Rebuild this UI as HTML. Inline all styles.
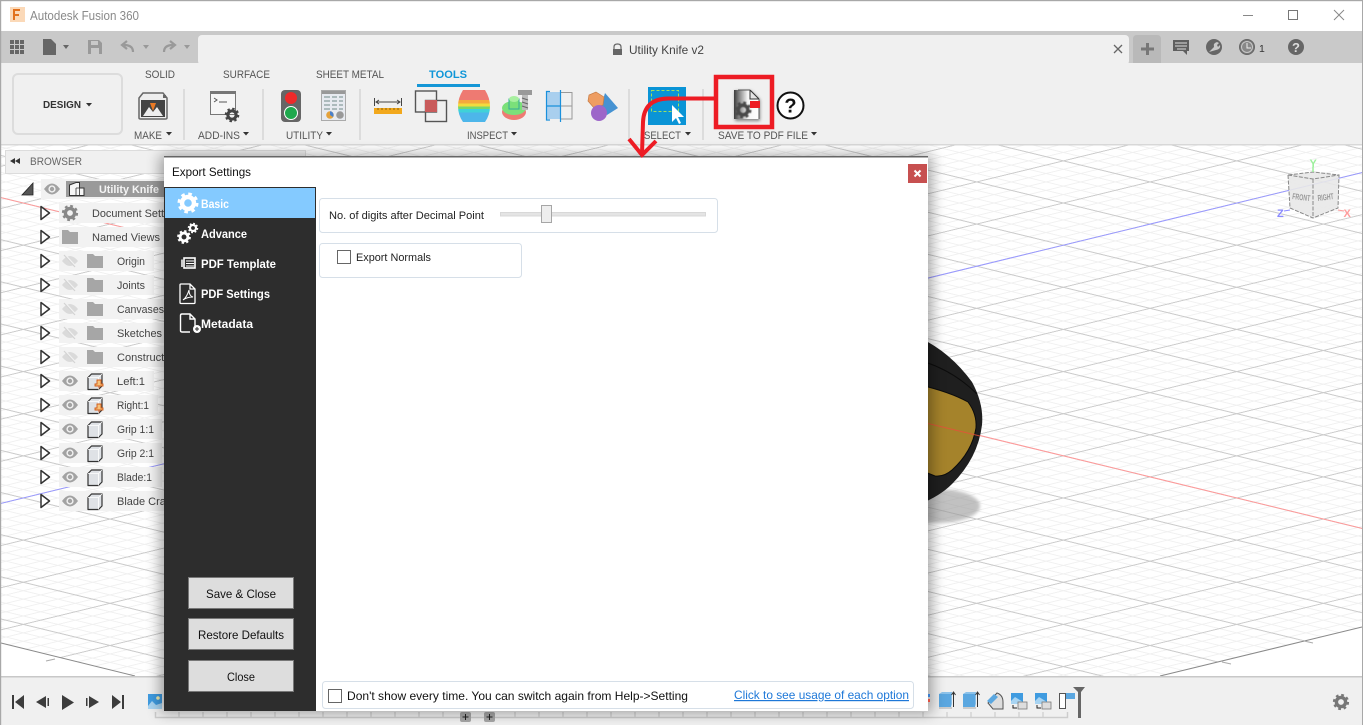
<!DOCTYPE html>
<html lang="en"><head><meta charset="utf-8"><title>Autodesk Fusion 360</title>
<style>
html,body{margin:0;padding:0;background:#fff;overflow:hidden;width:1366px;height:725px}
svg{display:block}
text{font-family:"Liberation Sans",Arial,sans-serif;white-space:pre}
.r{font-size:11px;fill:#555}
.tr{font-size:11px;fill:#444}
.d{font-size:12px;fill:#111}
.m{font-size:12px;fill:#fff;font-weight:bold}
</style></head><body>
<svg width="1366" height="725" viewBox="0 0 1366 725" xmlns="http://www.w3.org/2000/svg">
<defs>
<pattern id="minor" patternUnits="userSpaceOnUse" width="100" height="100" patternTransform="matrix(.8667 .2107 .8667 -.2107 630 350.5)">
<path d="M20 0V100M40 0V100M60 0V100M80 0V100M0 20H100M0 40H100M0 60H100M0 80H100" stroke="#f0f0f0" stroke-width="2.2" fill="none"/>
</pattern>
<pattern id="major" patternUnits="userSpaceOnUse" width="100" height="100" patternTransform="matrix(.8667 .2107 .8667 -.2107 630 350.5)">
<path d="M0 0V100M100 0V100M0 0H100M0 100H100" stroke="#cccccc" stroke-width="2.4" fill="none"/>
</pattern>
<clipPath id="gc"><path d="M1 145H1362V627L1160 676H135L1 643Z"/></clipPath>
<filter id="sh" x="-10%" y="-10%" width="120%" height="120%"><feGaussianBlur stdDeviation="7"/></filter>
<filter id="bl" x="-30%" y="-30%" width="160%" height="160%"><feGaussianBlur stdDeviation="1.5"/></filter>
<filter id="bs" x="-30%" y="-30%" width="160%" height="160%"><feGaussianBlur stdDeviation=".6"/></filter>
<linearGradient id="zb" x1="0" y1="0" x2="0" y2="1">
<stop offset="0" stop-color="#ee7a72"/><stop offset=".32" stop-color="#ee7a72"/><stop offset=".32" stop-color="#f5a93c"/><stop offset=".42" stop-color="#f5a93c"/><stop offset=".42" stop-color="#f1dc3e"/><stop offset=".52" stop-color="#f1dc3e"/><stop offset=".52" stop-color="#7ad86a"/><stop offset=".6" stop-color="#7ad86a"/><stop offset=".6" stop-color="#3fd2d8"/><stop offset=".7" stop-color="#3fd2d8"/><stop offset=".7" stop-color="#4db6ea"/><stop offset="1" stop-color="#4db6ea"/>
</linearGradient>
<linearGradient id="docg" x1="0" y1="0" x2="1" y2="0"><stop offset="0" stop-color="#3c3c3c"/><stop offset=".22" stop-color="#8a8a8a"/><stop offset=".55" stop-color="#f6f6f6"/><stop offset="1" stop-color="#fff"/></linearGradient>
<g id="gear"><circle r="4.6" fill="none" stroke="currentColor" stroke-width="3.4"/><circle r="6.8" fill="none" stroke="currentColor" stroke-width="2.6" stroke-dasharray="2.67 2.67"/></g>
<path id="tri" d="M-4 -6.5L4.5 0L-4 6.5Z" fill="#fff" stroke="#333" stroke-width="1.5" stroke-linejoin="round"/>
<g id="eye"><path d="M-8 0Q-4 -5.5 0 -5.5Q4 -5.5 8 0Q4 5.5 0 5.5Q-4 5.5 -8 0Z" fill="#a2a2a2"/><circle r="3.6" fill="#f2f2f2"/><circle r="2.2" fill="#a2a2a2"/></g>
<g id="eyeoff" opacity=".55"><path d="M-8 0Q-4 -5 0 -5Q4 -5 8 0Q4 5 0 5Q-4 5 -8 0Z" fill="#c8c8c8"/><path d="M-5 -6L6 6" stroke="#f2f2f2" stroke-width="2"/><path d="M-6 -6L5 6" stroke="#bbb" stroke-width="1.2"/></g>
<path id="folder" d="M0 -7H6L8 -5H16V7H0Z" fill="#a6a6a6"/>
<g id="body"><path d="M1 -3.5L4.5 -7H15V5L11.5 8.5H1Z" fill="#dfe2e6" stroke="#333" stroke-width="1.2" stroke-linejoin="round"/><path d="M1 -3.5H11.5V8.5M11.5 -3.5L15 -7" fill="none" stroke="#fff" stroke-width=".8"/></g>
<g id="pin"><path d="M3 -2H7V2H9V4H1V2H3Z" fill="#f7c27a" stroke="#d05a18" stroke-width=".9"/><path d="M5 4V6.5" stroke="#c8531a"/></g>
<g id="ca"><path d="M0 0H6L3 3.5Z" fill="#333"/></g>
</defs>

<!-- canvas -->
<rect x="0" y="0" width="1366" height="725" fill="#fff"/>
<g clip-path="url(#gc)">
<rect x="0" y="145" width="1366" height="535" fill="url(#minor)"/>
<rect x="0" y="145" width="1366" height="535" fill="url(#major)"/>
<path d="M0 197.4L1362 528.4" stroke="#ff9a9a" stroke-width="1" fill="none"/>
<path d="M0 503.6L1362 172.6" stroke="#9a9aff" stroke-width="1" fill="none"/>
</g>
<path d="M1 643L135 676M1160 676L1362 627" stroke="#8a8a8a" stroke-width="1" fill="none"/>
<path d="M46 661l9 -2 M1222 662l9 2 M1304 641l9 2" stroke="#aaa" stroke-width="1" fill="none"/>

<!-- model -->
<ellipse cx="938" cy="506" rx="42" ry="17" fill="#999" opacity=".6" filter="url(#bl)"/>
<path d="M920 338Q950 352 972 382Q984 404 982 425Q978 458 952 484Q940 496 920 504Z" fill="#1f1f1f"/>
<path d="M920 385Q950 392 968 402Q977 414 976 428Q972 452 952 470Q944 477 935 476L920 470Z" fill="#a5832b" stroke="#0c0c0c" stroke-width="1"/>
<path d="M928 423.5L980 436" stroke="#e8503a" stroke-width="1" opacity=".8"/>
<path d="M925 362Q955 372 977 394" stroke="#0c0c0c" fill="none"/>

<!-- view cube -->
<g>
<path d="M1288 175L1313 172L1339 175L1338 208L1313 218L1290 208Z" fill="#e8e8e8" opacity=".9"/>
<path d="M1288 175L1313 179L1339 175M1313 179V218M1288 175L1290 208L1313 218L1338 208L1339 175L1313 172Z" fill="none" stroke="#888" stroke-width="1" stroke-dasharray="4 1.5"/>
<text x="1292" y="199" font-size="8.5" font-weight="bold" fill="#999" transform="rotate(7 1292 199)" textLength="18" lengthAdjust="spacingAndGlyphs">FRONT</text>
<text x="1318" y="201" font-size="8.5" font-weight="bold" fill="#999" transform="rotate(-7 1318 201)" textLength="16" lengthAdjust="spacingAndGlyphs">RIGHT</text>
<text x="1309.500" y="167" font-size="11" font-weight="bold" fill="#9cf09c">Y</text>
<text x="1343.500" y="217" font-size="11" font-weight="bold" fill="#ff9c9c">X</text>
<text x="1277" y="217" font-size="11" font-weight="bold" fill="#8a8aff">Z</text>
<path d="M1313 167V172" stroke="#9cf09c" stroke-width="1.5"/><path d="M1338 210L1344 211" stroke="#ff9c9c"/><path d="M1284 211L1290 210" stroke="#8a8aff"/>
</g>

<!-- title bar -->
<rect x="0" y="0" width="1366" height="31" fill="#fff"/>
<rect x="10" y="7" width="15" height="15" fill="#fbd9b8"/>
<path d="M13 9H20V11H15V14H19V16H15V20H13Z" fill="#e2711d"/>
<text x="30" y="20" font-size="12.5" fill="#8a8a8a" textLength="109" lengthAdjust="spacingAndGlyphs">Autodesk Fusion 360</text>
<path d="M1243 15.5H1253" stroke="#888" stroke-width="1"/>
<rect x="1288.5" y="10.5" width="9" height="9" fill="none" stroke="#777" stroke-width="1"/>
<path d="M1334 10L1344 20M1344 10L1334 20" stroke="#888" stroke-width="1"/>

<!-- toolbar strip -->
<rect x="0" y="31" width="1363" height="32" fill="#c9c9c9"/>
<rect x="198" y="35" width="931" height="30" rx="4" fill="#f0f0f0"/>
<g fill="#666">
<path d="M10 40h4v4h-4zM15 40h4v4h-4zM20 40h4v4h-4zM10 45h4v4h-4zM15 45h4v4h-4zM20 45h4v4h-4zM10 50h4v4h-4zM15 50h4v4h-4zM20 50h4v4h-4z"/>
<path d="M43 39H51L56 44V55H43Z"/>
<path d="M63 45H69L66 49Z"/>
</g>
<path d="M88 40H99L102 43V54H88Z" fill="#999"/><rect x="91" y="41" width="7" height="4" fill="#c9c9c9"/><rect x="91" y="48" width="8" height="6" fill="#c9c9c9"/>
<path d="M133 52Q133 45 124 45M127 41L122 45L127 49" fill="none" stroke="#999" stroke-width="2.2"/>
<path d="M143 45H149L146 49Z" fill="#999"/>
<path d="M164 52Q164 45 173 45M170 41L175 45L170 49" fill="none" stroke="#999" stroke-width="2.2"/>
<path d="M184 45H190L187 49Z" fill="#999"/>
<path d="M614 49V47Q614 44 617.5 44Q621 44 621 47V49" fill="none" stroke="#666" stroke-width="1.2"/><rect x="613" y="49" width="9" height="6" fill="#666"/>
<text x="629" y="54" font-size="12" fill="#444" textLength="75" lengthAdjust="spacingAndGlyphs">Utility Knife v2</text>
<path d="M1114 45L1122 53M1122 45L1114 53" stroke="#666" stroke-width="1.3"/>
<path d="M1133 63V39Q1133 35 1137 35H1157Q1161 35 1161 39V63Z" fill="#b9b9b9"/>
<path d="M1141 49H1154M1147.5 43V55" stroke="#777" stroke-width="3"/>
<path d="M1173 40H1189V51H1187V55L1183 51H1173Z" fill="#5f5f5f"/><path d="M1175 43H1187M1175 46H1187M1177 49H1186" stroke="#ddd" stroke-width="1"/>
<circle cx="1214" cy="47" r="8" fill="#666"/><path d="M1209 52L1214 47Q1213 43 1217 42L1219 43L1217 45L1218 47L1220 45Q1221 49 1216 50Z" fill="#c9c9c9"/>
<circle cx="1247" cy="47" r="7.5" fill="#777" stroke="#666"/><circle cx="1247" cy="47" r="5.5" fill="#888" stroke="#c9c9c9"/><path d="M1247 43V48H1251" stroke="#eee" fill="none"/>
<text x="1259" y="52" font-size="10.5" fill="#333">1</text>
<circle cx="1296" cy="47" r="8" fill="#666"/><text x="1296" y="52" font-size="13" font-weight="bold" fill="#ddd" text-anchor="middle">?</text>

<!-- ribbon -->
<rect x="0" y="63" width="1363" height="81" fill="#f0f0f0"/>
<rect x="0" y="144" width="1363" height="1.5" fill="#d8d8d8"/>
<rect x="13" y="74" width="109" height="60" rx="5" fill="#f0f0f0" stroke="#dcdcdc" stroke-width="2"/>
<text x="43" y="108" font-size="10.5" font-weight="bold" fill="#333" textLength="38" lengthAdjust="spacingAndGlyphs">DESIGN</text>
<path d="M86 103H92L89 106.5Z" fill="#333"/>
<text class="r" x="145" y="78" textLength="30" lengthAdjust="spacingAndGlyphs">SOLID</text>
<text class="r" x="223" y="78" textLength="47" lengthAdjust="spacingAndGlyphs">SURFACE</text>
<text class="r" x="316" y="78" textLength="68" lengthAdjust="spacingAndGlyphs">SHEET METAL</text>
<text x="429" y="78" font-size="11" font-weight="bold" fill="#0f96d8" textLength="38" lengthAdjust="spacingAndGlyphs">TOOLS</text>
<rect x="417" y="84" width="63" height="3" fill="#1596d6"/>
<path d="M184 89V140M263 89V140M360 89V140M629 89V140M703 89V140" stroke="#dcdcdc" stroke-width="2"/>
<text class="r" x="134" y="139" textLength="28" lengthAdjust="spacingAndGlyphs">MAKE</text><use href="#ca" x="166" y="132"/>
<text class="r" x="198" y="139" textLength="42" lengthAdjust="spacingAndGlyphs">ADD-INS</text><use href="#ca" x="243" y="132"/>
<text class="r" x="286" y="139" textLength="37" lengthAdjust="spacingAndGlyphs">UTILITY</text><use href="#ca" x="326" y="132"/>
<text class="r" x="467" y="139" textLength="41" lengthAdjust="spacingAndGlyphs">INSPECT</text><use href="#ca" x="511" y="132"/>
<text class="r" x="644" y="139" textLength="37" lengthAdjust="spacingAndGlyphs">SELECT</text><use href="#ca" x="685" y="132"/>
<text class="r" x="718" y="139" textLength="90" lengthAdjust="spacingAndGlyphs">SAVE TO PDF FILE</text><use href="#ca" x="811" y="132"/>

<!-- make -->
<path d="M139 98L143 93H163L167 98V118Q167 119 165 119H141Q139 119 139 118Z" fill="#eee" stroke="#666" stroke-width="1.5"/>
<rect x="141" y="100" width="24" height="17" fill="#444"/><rect x="163" y="95" width="3" height="3" fill="#666"/>
<path d="M143 116L149 107L153 112L157 107L163 116Z" fill="#eee"/><path d="M150 103H156L153 111Z" fill="#ea7a25"/>
<!-- add-ins -->
<rect x="210.500" y="91.500" width="25" height="23" fill="#f6f6f6" stroke="#777"/><rect x="210" y="91" width="26" height="3" fill="#777"/>
<path d="M214 98L217 100L214 102M219 102H227" stroke="#555" fill="none"/>
<use href="#gear" style="color:#444" transform="translate(232 115) scale(.9)"/>
<!-- traffic -->
<rect x="281" y="90" width="20" height="32" rx="4" fill="#666"/><circle cx="291" cy="98" r="6" fill="#ee2a2a"/><circle cx="291" cy="113" r="6.500" fill="#1fa84d" stroke="#fff" stroke-width="1"/>
<!-- table -->
<rect x="321.500" y="90.500" width="24" height="30" fill="#e7eaf0" stroke="#aaa"/><rect x="322" y="91" width="23" height="3" fill="#999"/>
<path d="M324 97H330M332 97H337M339 97H343M324 101H330M332 101H337M339 101H343M324 105H330M332 105H337M339 105H343M324 109H330M332 109H337M339 109H343" stroke="#9aa" stroke-width="1.5"/>
<circle cx="330" cy="115" r="3.800" fill="#e4a23c"/><path d="M330 115V111.200A3.800 3.800 0 0 1 333 117Z" fill="#4a80cc"/><circle cx="340" cy="115" r="3.800" fill="#999"/>
<!-- ruler -->
<rect x="374" y="108" width="28" height="6" fill="#f2a81c"/>
<path d="M374.500 98V106M401.500 98V106M376 102H400M379 100L376 102L379 104M397 100L400 102L397 104" stroke="#444" fill="none"/>
<path d="M378 108v2M382 108v2M386 108v2M390 108v2M394 108v2M398 108v2" stroke="#8a6410"/>
<!-- interference -->
<rect x="415.500" y="91" width="21" height="21" fill="none" stroke="#555" stroke-width="1.4"/><rect x="425.500" y="100.500" width="21" height="21" fill="none" stroke="#555" stroke-width="1.4"/><rect x="425" y="100" width="12" height="12" fill="#c95b5b"/>
<!-- zebra -->
<path d="M463 90H485Q490 98 490 106Q490 115 485 122H463Q458 115 458 106Q458 98 463 90Z" fill="url(#zb)"/>
<!-- bolt -->
<ellipse cx="514" cy="112" rx="12" ry="8" fill="#ee7a72"/><ellipse cx="514" cy="108" rx="12" ry="7" fill="#7be07a"/><rect x="509" y="99" width="10" height="10" fill="#7be07a" stroke="#3a9"/><ellipse cx="514" cy="99" rx="5" ry="3" fill="#a8f0a0"/>
<rect x="518" y="90" width="14" height="5" fill="#999"/><rect x="522" y="95" width="6" height="15" fill="#bbb"/><path d="M522 98l6 2M522 102l6 2M522 106l6 2" stroke="#666"/>
<!-- section -->
<rect x="547" y="92" width="14" height="14" fill="#a9cfee"/><rect x="547" y="106" width="14" height="13" fill="#a9cfee"/>
<path d="M561 92.500H572V119H561M561 106H572" fill="none" stroke="#999" stroke-width="1"/>
<path d="M550 91.500H546.500V120H550M547 106H561M560.500 90V122" fill="none" stroke="#1a90dc" stroke-width="1.200"/>
<!-- shapes -->
<path d="M605 93L618 108L607 115L600 110Z" fill="#4592d2"/>
<path d="M596 92L604 97L603 105L594 108L588 101L589 95Z" fill="#ee9d62" stroke="#c77c45" stroke-width=".7"/>
<circle cx="599" cy="113" r="8" fill="#9d66c9"/>
<!-- select -->
<rect x="648" y="87" width="38" height="38" fill="#0a94d6"/>
<rect x="651.500" y="90.500" width="27" height="21" fill="none" stroke="#9fe05f" stroke-width="1" stroke-dasharray="3 2"/>
<path d="M672 105V122L676 118L679 124L681 123L678 117H684Z" fill="#fff"/>
<!-- save pdf -->
<path d="M735 91H751L760 100V121H735Z" fill="#555" opacity=".7" filter="url(#bl)"/>
<path d="M734 90H750L759 99V119H734Z" fill="url(#docg)"/>
<path d="M750 90L759 99M750 90V99H759" fill="#e5e5e5" stroke="#333" stroke-width="1"/>
<path d="M750 90H738M759 99V119" stroke="#555" stroke-width="1" fill="none"/>
<g filter="url(#bs)"><use href="#gear" style="color:#4a4a4a" transform="translate(743 110) scale(1.050)"/></g>
<rect x="750" y="101" width="10" height="7" fill="#ed1c24"/>
<circle cx="790.500" cy="105.500" r="13" fill="#fff" stroke="#111" stroke-width="2"/>
<text x="790.500" y="112.500" font-size="20" font-weight="bold" fill="#111" text-anchor="middle">?</text>

<!-- browser -->
<rect x="5.500" y="150.500" width="300" height="23" fill="#f0f0f0" stroke="#dcdcdc"/>
<path d="M15 158V164L10 161ZM20 158V164L15 161Z" fill="#333"/>
<text x="30" y="165" font-size="11" fill="#666" textLength="52" lengthAdjust="spacingAndGlyphs">BROWSER</text>
<!-- rows -->
<g fill="#f2f2f2">
<rect x="41" y="179" width="125" height="20"/>
<rect x="59" y="203" width="110" height="20"/><rect x="59" y="227" width="110" height="20"/>
<rect x="59" y="251" width="95" height="20"/><rect x="59" y="275" width="95" height="20"/>
<rect x="59" y="299" width="110" height="20"/><rect x="59" y="323" width="110" height="20"/><rect x="59" y="347" width="110" height="20"/>
<rect x="59" y="371" width="95" height="20"/><rect x="59" y="395" width="99" height="20"/>
<rect x="59" y="419" width="103" height="20"/><rect x="59" y="443" width="103" height="20"/><rect x="59" y="467" width="103" height="20"/><rect x="59" y="491" width="108" height="20"/>
</g>
<path d="M33 183V195H22Z" fill="#555" stroke="#222" stroke-width=".8"/>
<use href="#eye" x="52" y="189"/>
<rect x="66" y="181" width="100" height="16" fill="#9a9a9a"/>
<path d="M69.500 185L76 182.500H79.500V188H84V195.500H69.500Z" fill="#f6f6f6" stroke="#333" stroke-width="1"/><path d="M76 188H79.500V195M76 188V195" fill="none" stroke="#333" stroke-width=".8"/>
<text x="99" y="193" font-size="11" font-weight="bold" fill="#f4f4f4" textLength="60" lengthAdjust="spacingAndGlyphs">Utility Knife</text>

<use href="#tri" x="45" y="213"/><use href="#tri" x="45" y="237"/><use href="#tri" x="45" y="261"/><use href="#tri" x="45" y="285"/><use href="#tri" x="45" y="309"/><use href="#tri" x="45" y="333"/><use href="#tri" x="45" y="357"/><use href="#tri" x="45" y="381"/><use href="#tri" x="45" y="405"/><use href="#tri" x="45" y="429"/><use href="#tri" x="45" y="453"/><use href="#tri" x="45" y="477"/><use href="#tri" x="45" y="501"/>
<use href="#gear" x="70" y="213" style="color:#888"/>
<use href="#folder" x="62" y="237"/>
<text class="tr" x="92" y="217" textLength="92" lengthAdjust="spacingAndGlyphs">Document Settings</text>
<text class="tr" x="92" y="241" textLength="68" lengthAdjust="spacingAndGlyphs">Named Views</text>
<use href="#eyeoff" x="70" y="261"/><use href="#eyeoff" x="70" y="285"/><use href="#eyeoff" x="70" y="309"/><use href="#eyeoff" x="70" y="333"/><use href="#eyeoff" x="70" y="357"/>
<use href="#folder" x="87" y="261"/><use href="#folder" x="87" y="285"/><use href="#folder" x="87" y="309"/><use href="#folder" x="87" y="333"/><use href="#folder" x="87" y="357"/>
<text class="tr" x="117" y="265" textLength="28" lengthAdjust="spacingAndGlyphs">Origin</text>
<text class="tr" x="117" y="289" textLength="28" lengthAdjust="spacingAndGlyphs">Joints</text>
<text class="tr" x="117" y="313" textLength="47" lengthAdjust="spacingAndGlyphs">Canvases</text>
<text class="tr" x="117" y="337" textLength="45" lengthAdjust="spacingAndGlyphs">Sketches</text>
<text class="tr" x="117" y="361" textLength="62" lengthAdjust="spacingAndGlyphs">Construction</text>
<use href="#eye" x="70" y="381"/><use href="#eye" x="70" y="405"/><use href="#eye" x="70" y="429"/><use href="#eye" x="70" y="453"/><use href="#eye" x="70" y="477"/><use href="#eye" x="70" y="501"/>
<use href="#body" x="87" y="381"/><use href="#body" x="87" y="405"/><use href="#body" x="87" y="429"/><use href="#body" x="87" y="453"/><use href="#body" x="87" y="477"/><use href="#body" x="87" y="501"/>
<use href="#pin" x="94" y="382"/><use href="#pin" x="94" y="406"/>
<text class="tr" x="117" y="385" textLength="28" lengthAdjust="spacingAndGlyphs">Left:1</text>
<text class="tr" x="117" y="409" textLength="32" lengthAdjust="spacingAndGlyphs">Right:1</text>
<text class="tr" x="117" y="433" textLength="37" lengthAdjust="spacingAndGlyphs">Grip 1:1</text>
<text class="tr" x="117" y="457" textLength="37" lengthAdjust="spacingAndGlyphs">Grip 2:1</text>
<text class="tr" x="117" y="481" textLength="35" lengthAdjust="spacingAndGlyphs">Blade:1</text>
<text class="tr" x="117" y="505" textLength="55" lengthAdjust="spacingAndGlyphs">Blade Craft</text>

<!-- timeline -->
<rect x="0" y="677" width="1363" height="48" fill="#f0f0f0"/>
<rect x="0" y="676" width="1363" height="1.500" fill="#c8c8c8"/>
<g fill="#3c3c3c">
<path d="M12 695H14V709H12ZM24 695V709L15 702Z"/>
<path d="M46 696V708L36 702ZM47.500 698H49V706H47.500Z"/>
<path d="M62 695L74 702.500L62 710Z"/>
<path d="M89 696V708L99 702ZM86 698H87.500V706H86Z"/>
<path d="M112 695L121 702L112 709ZM122 695H124V709H122Z"/>
</g>
<rect x="148" y="694" width="14" height="15" fill="#3f9be0"/><circle cx="158" cy="698" r="1.800" fill="#f5efb0"/><path d="M148 706L152 701L156 705L162 703V709H148Z" fill="#a8d4f2"/>
<path d="M155.500 712V717.500H1067.500V712" fill="none" stroke="#cdcdcd" stroke-width="1.500"/>
<path d="M179 712v5M203 712v5M227 712v5M251 712v5M275 712v5M299 712v5M323 712v5M347 712v5M371 712v5M395 712v5M419 712v5M443 712v5M467 712v5M491 712v5M515 712v5M539 712v5M563 712v5M587 712v5M611 712v5M635 712v5M659 712v5M683 712v5M707 712v5M731 712v5M755 712v5M779 712v5M803 712v5M827 712v5M851 712v5M875 712v5M899 712v5M923 712v5M947 712v5M971 712v5M995 712v5M1019 712v5M1043 712v5" stroke="#cdcdcd" stroke-width="1.200"/>
<!-- timeline features -->
<rect x="939" y="694" width="12" height="13" fill="#5ba7e0"/><path d="M939 694L942 692H952V704L951 707V694Z" fill="#8cc2ea"/><rect x="939" y="707" width="13" height="2" fill="#ccc"/>
<path d="M953.500 693V707M951.500 695L953.500 692L955.500 695" stroke="#333" fill="none"/>
<rect x="963" y="694" width="12" height="13" fill="#5ba7e0"/><path d="M963 694L966 692H976V704L975 707V694Z" fill="#8cc2ea"/><rect x="963" y="707" width="13" height="2" fill="#ccc"/>
<path d="M977.500 693V707M975.500 695L977.500 692L979.500 695" stroke="#333" fill="none"/>
<path d="M988 703L997 693Q1003 695 1003 702V709H993Z" fill="#ddd" stroke="#555"/><path d="M987 701L994 694L998 697L991 704Z" fill="#5ba7e0"/>
<rect x="1011" y="693" width="12" height="11" fill="#3f9be0"/><path d="M1011 701L1015 697L1023 702V704H1011Z" fill="#a8d4f2"/><rect x="1018" y="702" width="9" height="7" fill="#ddd" stroke="#777" stroke-width=".8"/><path d="M1013 705V708H1017" stroke="#222" fill="none"/>
<rect x="1035" y="693" width="12" height="11" fill="#3f9be0"/><path d="M1035 701L1039 697L1047 702V704H1035Z" fill="#a8d4f2"/><rect x="1042" y="702" width="9" height="7" fill="#ddd" stroke="#777" stroke-width=".8"/><path d="M1037 705V708H1041" stroke="#222" fill="none"/>
<rect x="1059.500" y="693.500" width="6" height="15" fill="#fff" stroke="#555"/><rect x="1066" y="693" width="9" height="6" fill="#5ba7e0"/>
<path d="M1073 687H1085L1081 692V718H1078V692Z" fill="#666"/>
<use href="#gear" x="1341" y="702" style="color:#777"/>
<rect x="460" y="712" width="11" height="10" rx="2" fill="#a6a6a6"/><path d="M462.500 717H468.500M465.500 714V720" stroke="#222"/>
<rect x="484" y="712" width="11" height="10" rx="2" fill="#a6a6a6"/><path d="M486.500 717H492.500M489.500 714V720" stroke="#222"/>

<!-- window borders -->
<rect x="0" y="0" width="1363" height="1.200" fill="#a8a8a8"/>
<rect x="0" y="0" width="1.200" height="725" fill="#a8a8a8"/>
<rect x="1362" y="0" width="1" height="725" fill="#a8a8a8"/>
<rect x="1363" y="0" width="3" height="725" fill="#fff"/>

<!-- dialog -->
<rect x="160" y="155" width="772" height="558" fill="#000" opacity=".35" filter="url(#sh)"/>
<rect x="164" y="157" width="764" height="554" fill="#fff"/>
<rect x="164" y="156" width="764" height="1.500" fill="#666"/>
<text x="172" y="176" font-size="12" fill="#111" textLength="79" lengthAdjust="spacingAndGlyphs">Export Settings</text>
<rect x="908" y="164" width="19" height="19" fill="#c75050"/>
<path d="M914.500 170.500L920.500 176.500M920.500 170.500L914.500 176.500" stroke="#fff" stroke-width="2"/>
<rect x="164" y="187" width="152" height="524" fill="#2d2d2d"/>
<rect x="165" y="188" width="150" height="30" fill="#84caff"/>
<use href="#gear" style="color:#fff" transform="translate(188 203) scale(1.300)"/>
<text class="m" x="201" y="208" textLength="28" lengthAdjust="spacingAndGlyphs">Basic</text>
<use href="#gear" style="color:#fff" transform="translate(184 237) scale(.85)"/>
<use href="#gear" style="color:#fff" transform="translate(193 228) scale(.65)"/>
<text class="m" x="201" y="238" textLength="46" lengthAdjust="spacingAndGlyphs">Advance</text>
<rect x="184" y="258" width="11" height="10" fill="none" stroke="#fff" stroke-width="1.600"/><path d="M186 261H194M186 263.500H194M186 266H194" stroke="#fff"/><path d="M182 259.500V267" stroke="#fff" stroke-width="1.500"/>
<text class="m" x="201" y="268" textLength="75" lengthAdjust="spacingAndGlyphs">PDF Template</text>
<path d="M181 284H190L195 289V302.500Q195 303.500 194 303.500H181Q180 303.500 180 302.500V285Q180 284 181 284ZM190 284V289H195" fill="none" stroke="#fff" stroke-width="1.300"/>
<path d="M183 300Q187 297 189 290Q189 296 193 297Q187 297 183 300Z" fill="none" stroke="#fff"/>
<text class="m" x="201" y="298" textLength="69" lengthAdjust="spacingAndGlyphs">PDF Settings</text>
<path d="M190 332H182Q180.500 332 180.500 330.500V315.500Q180.500 314 182 314H190L195 319V326M190 314V319H195" fill="none" stroke="#fff" stroke-width="1.400"/>
<circle cx="197" cy="329" r="4" fill="#fff"/><path d="M195 329H199M197 327V331" stroke="#2d2d2d"/>
<text class="m" x="201" y="328" textLength="52" lengthAdjust="spacingAndGlyphs">Metadata</text>

<rect x="188.500" y="577.500" width="105" height="31" fill="#ddd" stroke="#777"/>
<text class="d" x="206" y="598" textLength="70" lengthAdjust="spacingAndGlyphs">Save &amp; Close</text>
<rect x="188.500" y="618.500" width="105" height="31" fill="#ddd" stroke="#777"/>
<text class="d" x="198" y="639" textLength="86" lengthAdjust="spacingAndGlyphs">Restore Defaults</text>
<rect x="188.500" y="660.500" width="105" height="31" fill="#ddd" stroke="#777"/>
<text class="d" x="227" y="681" textLength="28" lengthAdjust="spacingAndGlyphs">Close</text>

<rect x="319.500" y="198.500" width="398" height="34" rx="3" fill="#fff" stroke="#d6dfe8"/>
<text x="329" y="219" font-size="11" fill="#222" textLength="155" lengthAdjust="spacingAndGlyphs">No. of digits after Decimal Point</text>
<rect x="500.500" y="212.500" width="205" height="3.500" fill="#e4e4e4" stroke="#d8d8d8"/>
<rect x="541.500" y="205.500" width="10" height="17" fill="#eeeeee" stroke="#a6a6a6"/>
<rect x="319.500" y="243.500" width="202" height="34" rx="3" fill="#fff" stroke="#d6dfe8"/>
<rect x="337.500" y="250.500" width="13" height="13" fill="#fff" stroke="#666"/>
<text x="356" y="261" font-size="11" fill="#222" textLength="75" lengthAdjust="spacingAndGlyphs">Export Normals</text>
<rect x="322.500" y="681.500" width="591" height="27" rx="3" fill="#fff" stroke="#d6dfe8"/>
<rect x="328.500" y="689.500" width="13" height="13" fill="#fff" stroke="#666"/>
<text x="347" y="700" font-size="12" fill="#111" textLength="341" lengthAdjust="spacingAndGlyphs">Don't show every time. You can switch again from Help-&gt;Setting</text>
<text x="734" y="699" font-size="12" fill="#1e78d8" text-decoration="underline" textLength="175" lengthAdjust="spacingAndGlyphs">Click to see usage of each option</text>
<path d="M928 694h2v3h-2z" fill="#3a7ecf"/><path d="M928 699h2v3h-2z" fill="#e05040"/>

<!-- annotation -->
<rect x="716" y="77" width="56" height="50" fill="none" stroke="#ed1c24" stroke-width="4.500"/>
<path d="M716 98.500H668Q644 99 643 122L642 154" fill="none" stroke="#ed1c24" stroke-width="4"/>
<path d="M629 139L642 155L656 141" fill="none" stroke="#ed1c24" stroke-width="4"/>
</svg>
</body></html>
